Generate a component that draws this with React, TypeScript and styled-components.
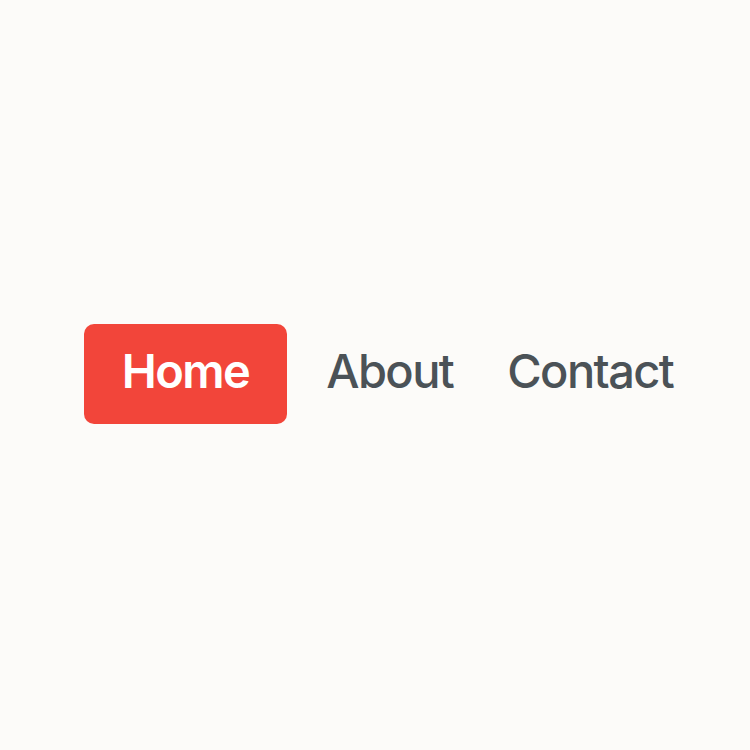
import styled, { createGlobalStyle } from 'styled-components'

const GlobalStyle = createGlobalStyle`
  html, body {
    margin: 0;
    padding: 0;
    background: #fcfbf9;
  }
  body {
    font-family: Inter, 'Liberation Sans', sans-serif;
  }
`

const Page = styled.div`
  display: flex;
  align-items: center;
  justify-content: center;
  width: 100vw;
  height: 100vh;
  background: #fcfbf9;
`

const Nav = styled.nav`
  display: flex;
  align-items: center;
  gap: 24px;
  margin-left: 22px;
  margin-top: -2px;
`

const NavItem = styled.a<{ $active?: boolean }>`
  display: flex;
  align-items: center;
  height: 100px;
  padding: 0 ${(p) => (p.$active ? '38px' : '15px')} 8px;
  border-radius: 10px;
  font-size: 47px;
  font-weight: ${(p) => (p.$active ? 600 : 500)};
  letter-spacing: -1.6px;
  color: ${(p) => (p.$active ? '#ffffff' : '#4b5257')};
  background: ${(p) => (p.$active ? '#f2453a' : 'transparent')};
  text-decoration: none;
  box-sizing: border-box;
`

const links = ['Home', 'About', 'Contact']

export default function App() {
  return (
    <>
      <GlobalStyle />
      <Page>
        <Nav>
          {links.map((label, i) => (
            <NavItem key={label} href="#" $active={i === 0}>
              {label}
            </NavItem>
          ))}
        </Nav>
      </Page>
    </>
  )
}
